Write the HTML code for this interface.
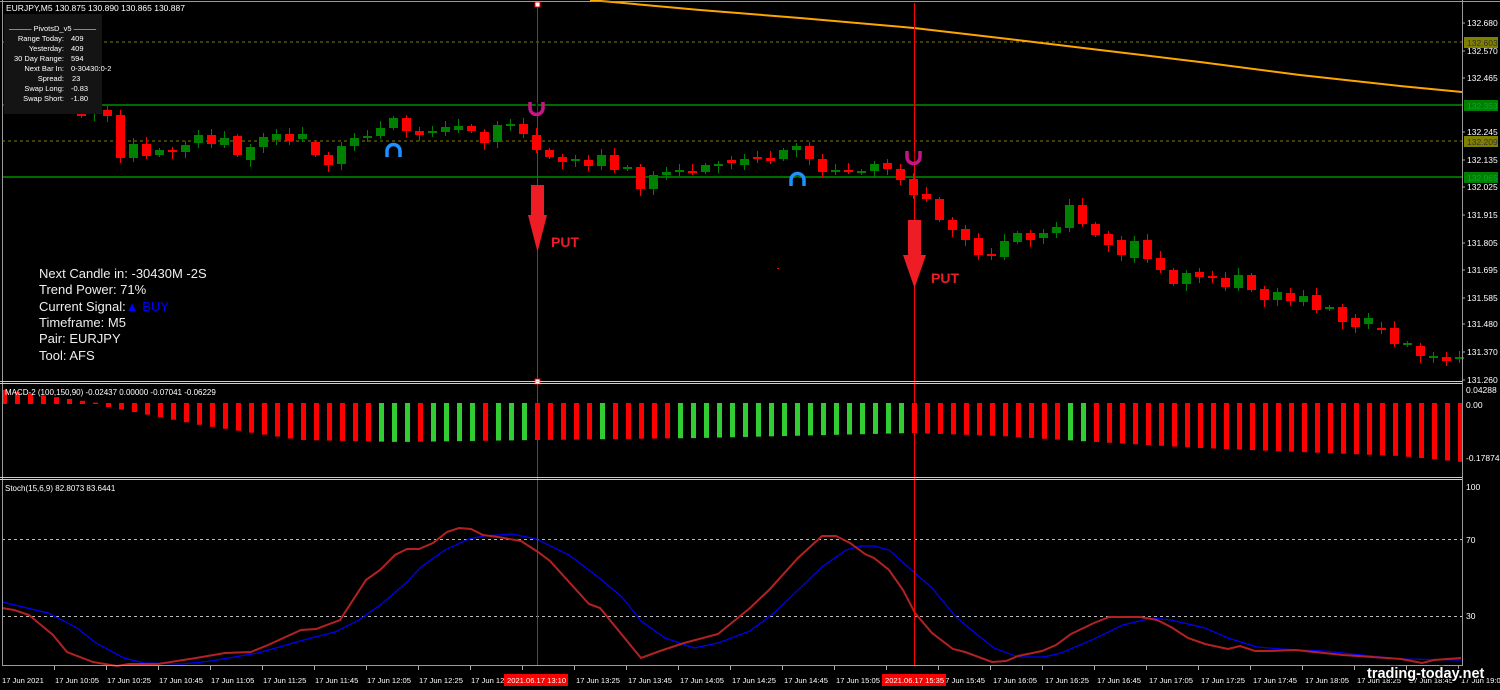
<!DOCTYPE html>
<html><head><meta charset="utf-8"><style>
html,body{margin:0;padding:0;background:#000;width:1500px;height:690px;overflow:hidden}
svg{display:block}
text{font-family:"Liberation Sans",sans-serif}
.ax{fill:#fff;font-size:9px}
.tl{fill:#fff;font-size:8.5px}
</style></head><body>
<svg id="s" width="1500" height="690" xmlns="http://www.w3.org/2000/svg">
<rect width="1500" height="690" fill="#000"/>
<g id="grid">
<line x1="2" y1="42" x2="1462" y2="42" stroke="#808000" stroke-dasharray="3,3"/>
<line x1="2" y1="141" x2="1462" y2="141" stroke="#808000" stroke-dasharray="3,3"/>
<line x1="2" y1="105" x2="1462" y2="105" stroke="#009000" stroke-width="1.5"/>
<line x1="2" y1="177" x2="1462" y2="177" stroke="#009000" stroke-width="1.5"/>
<line x1="2" y1="539.5" x2="1462" y2="539.5" stroke="#bbb" stroke-dasharray="3,3"/>
<line x1="2" y1="616.5" x2="1462" y2="616.5" stroke="#bbb" stroke-dasharray="3,3"/>
</g>
<polyline fill="none" stroke="#ffa500" stroke-width="2" points="590,0 700,10 800,18 914,28 1000,38 1100,50 1200,62 1300,75 1400,86 1462,92"/>
<g id="candles"></g>
<g id="macd"></g>
<polyline fill="none" stroke="#0000ff" stroke-width="1.2" points="2,602 48,613 77,628 96,643 124,658 144,663 182,664 211,661 258,653 311,638 335,632 359,620 383,603 407,582 421,567 445,550 469,539 483,536 512,534 536,539 569,555 598,577 622,597 641,621 665,638 694,648 718,643 750,631 774,613 798,590 822,567 846,550 860,546 874,546 889,550 908,567 932,588 956,617 975,633 994,648 1018,657 1044,657 1061,653 1094,639 1123,625 1152,618 1171,620 1205,628 1228,638 1257,647 1281,649 1324,651 1362,655 1401,659 1461,660"/>
<polyline fill="none" stroke="#b22222" stroke-width="2" points="2,608 14,610 29,615 53,635 67,652 93,662 117,666 129,664 158,664 196,658 225,653 251,652 268,645 301,630 316,629 340,620 366,580 380,570 395,555 407,549 419,549 433,543 447,532 459,528 471,529 483,535 498,537 521,541 538,552 550,561 589,604 600,608 641,658 660,651 684,643 718,634 750,608 769,590 798,558 822,536 836,536 850,543 865,554 874,558 889,570 903,590 915,613 932,633 953,649 965,652 992,662 1006,661 1018,656 1042,651 1056,645 1071,634 1094,623 1109,617 1128,617 1140,617 1157,620 1171,627 1188,638 1205,644 1228,649 1240,646 1255,651 1271,651 1295,650 1324,653 1343,655 1372,657 1401,659 1422,663 1434,660 1461,658"/>
<line x1="537.5" y1="3" x2="537.5" y2="666" stroke="#ff0000"/>
<line x1="914.5" y1="3" x2="914.5" y2="666" stroke="#ff0000"/>
<rect x="535" y="2" width="5" height="5" fill="#fff" stroke="#e00" stroke-width="1"/>
<rect x="535" y="379" width="5" height="5" fill="#fff" stroke="#e00" stroke-width="1"/>
<path d="M531 185 H544 V215 H547 L537.5 252 L528 215 H531 Z" fill="#ee1c24"/>
<text x="551" y="247" fill="#ee1c24" font-size="14" font-weight="bold">PUT</text>
<path d="M908 220 H921 V255 H926 L914.5 288 L903 255 H908 Z" fill="#ee1c24"/>
<text x="931" y="283" fill="#ee1c24" font-size="14" font-weight="bold">PUT</text>
<rect x="777" y="268" width="2" height="1" fill="#e00"/>
<g fill="none" stroke-width="3.5">
<path d="M530 102 V108 A6.5 6.5 0 0 0 543 108 V102" stroke="#c71585"/>
<path d="M907 151 V157 A6.5 6.5 0 0 0 920 157 V151" stroke="#c71585"/>
<path d="M387 157 V151 A6.5 6.5 0 0 1 400 151 V157" stroke="#1e90ff"/>
<path d="M791 186 V180 A6.5 6.5 0 0 1 804 180 V186" stroke="#1e90ff"/>
</g>
<g stroke="#000" stroke-width="1.5"><line x1="536.5" y1="102" x2="536.5" y2="112"/><line x1="913.5" y1="151" x2="913.5" y2="161"/><line x1="393.5" y1="148" x2="393.5" y2="157"/><line x1="797.5" y1="177" x2="797.5" y2="186"/></g>
<g stroke="#9a9a9a" fill="none">
<line x1="0" y1="1.5" x2="1500" y2="1.5"/>
<line x1="2.5" y1="0" x2="2.5" y2="666"/>
<line x1="1462.5" y1="0" x2="1462.5" y2="666"/>
<line x1="0" y1="381.5" x2="1462" y2="381.5" stroke="#ccc"/>
<line x1="0" y1="383.5" x2="1462" y2="383.5" stroke="#ccc"/>
<line x1="0" y1="477.5" x2="1462" y2="477.5" stroke="#ccc"/>
<line x1="0" y1="479.5" x2="1462" y2="479.5" stroke="#ccc"/>
<line x1="2" y1="665.5" x2="1462" y2="665.5"/>
</g>
<text x="6" y="11" class="tl">EURJPY,M5  130.875 130.890 130.865 130.887</text>
<rect x="4" y="14" width="98" height="100" fill="#141414"/>
<g class="tl" style="font-size:7.5px">
<text x="9" y="31">——— PivotsD_v5 ———</text>
<text x="64" y="41" text-anchor="end">Range  Today:</text><text x="71" y="41">409</text>
<text x="64" y="51" text-anchor="end">Yesterday:</text><text x="71" y="51">409</text>
<text x="64" y="61" text-anchor="end">30 Day Range:</text><text x="71" y="61">594</text>
<text x="64" y="71" text-anchor="end">Next Bar In:</text><text x="71" y="71">0-30430:0-2</text>
<text x="64" y="81" text-anchor="end">Spread:</text><text x="72" y="81">23</text>
<text x="64" y="91" text-anchor="end">Swap  Long:</text><text x="71" y="91">-0.83</text>
<text x="64" y="101" text-anchor="end">Swap  Short:</text><text x="71" y="101">-1.80</text>
</g>
<g fill="#eee" font-size="13">
<text x="39" y="278">Next Candle in: -30430M -2S</text>
<text x="39" y="294">Trend Power: 71%</text>
<text x="39" y="311">Current Signal:<tspan fill="#0000ff">▲ BUY</tspan></text>
<text x="39" y="327">Timeframe: M5</text>
<text x="39" y="343">Pair: EURJPY</text>
<text x="39" y="360">Tool: AFS</text>
</g>
<text x="5" y="395" class="tl" style="font-size:8px">MACD-2 (100,150,90) -0.02437 0.00000 -0.07041 -0.06229</text>
<text x="5" y="491" class="tl" style="font-size:8px">Stoch(15,6,9) 82.8073 83.6441</text>
<g class="ax" style="font-size:8.5px">
<text x="1467" y="26">132.680</text>
<text x="1467" y="54">132.570</text>
<text x="1467" y="81">132.465</text>
<text x="1467" y="135">132.245</text>
<text x="1467" y="163">132.135</text>
<text x="1467" y="190">132.025</text>
<text x="1467" y="218">131.915</text>
<text x="1467" y="246">131.805</text>
<text x="1467" y="273">131.695</text>
<text x="1467" y="301">131.585</text>
<text x="1467" y="327">131.480</text>
<text x="1467" y="355">131.370</text>
<text x="1467" y="383">131.260</text>
<rect x="1464" y="37" width="34" height="11" fill="#808000"/><text x="1467" y="46" fill="#333">132.603</text>
<rect x="1464" y="100" width="34" height="11" fill="#008000"/><text x="1467" y="109" fill="#0a3">132.353</text>
<rect x="1464" y="136" width="34" height="11" fill="#808000"/><text x="1467" y="145" fill="#333">132.209</text>
<rect x="1464" y="172" width="34" height="11" fill="#008000"/><text x="1467" y="181" fill="#0a3">132.065</text>
<text x="1466" y="393">0.04288</text>
<text x="1466" y="408">0.00</text>
<text x="1466" y="461">-0.17874</text>
<text x="1466" y="490">100</text>
<text x="1466" y="543">70</text>
<text x="1466" y="619">30</text>
</g>
<g id="ticks" stroke="#aaa"></g>
<g class="tl" style="font-size:7.6px">
<text x="2" y="683">17 Jun 2021</text>
<text x="55" y="683">17 Jun 10:05</text>
<text x="107" y="683">17 Jun 10:25</text>
<text x="159" y="683">17 Jun 10:45</text>
<text x="211" y="683">17 Jun 11:05</text>
<text x="263" y="683">17 Jun 11:25</text>
<text x="315" y="683">17 Jun 11:45</text>
<text x="367" y="683">17 Jun 12:05</text>
<text x="419" y="683">17 Jun 12:25</text>
<text x="471" y="683">17 Jun 12:45</text>
<text x="576" y="683">17 Jun 13:25</text>
<text x="628" y="683">17 Jun 13:45</text>
<text x="680" y="683">17 Jun 14:05</text>
<text x="732" y="683">17 Jun 14:25</text>
<text x="784" y="683">17 Jun 14:45</text>
<text x="836" y="683">17 Jun 15:05</text>
<text x="941" y="683">17 Jun 15:45</text>
<text x="993" y="683">17 Jun 16:05</text>
<text x="1045" y="683">17 Jun 16:25</text>
<text x="1097" y="683">17 Jun 16:45</text>
<text x="1149" y="683">17 Jun 17:05</text>
<text x="1201" y="683">17 Jun 17:25</text>
<text x="1253" y="683">17 Jun 17:45</text>
<text x="1305" y="683">17 Jun 18:05</text>
<text x="1357" y="683">17 Jun 18:25</text>
<text x="1409" y="683">17 Jun 18:45</text>
<text x="1461" y="683">17 Jun 19:05</text>
<rect x="504" y="674" width="64" height="12" fill="#ff0000"/>
<text x="507" y="683">2021.06.17 13:10</text>
<rect x="882" y="674" width="64" height="12" fill="#ff0000"/>
<text x="885" y="683">2021.06.17 15:35</text>
</g>
<line x1="1350" y1="671" x2="1370" y2="671" stroke="#000" stroke-width="2"/>
<text x="1367" y="678" fill="#fff" stroke="#000" stroke-width="2.5" paint-order="stroke" font-size="14.5" font-weight="bold">trading-today.net</text>
</svg>
<script>
var NS="http://www.w3.org/2000/svg";
function el(p,t,a){var e=document.createElementNS(NS,t);for(var k in a)e.setAttribute(k,a[k]);p.appendChild(e);return e;}
var C=[[81,112,116,'r'],[94,112,114,'g'],[107,110,116,'r'],[120,115,158,'r'],[133,144,158,'g'],[146,144,156,'r'],[159,150,155,'g'],[172,150,152,'r'],[185,145,152,'g'],[198,135,143,'g'],[211,135,144,'r'],[224,138,145,'g'],[237,136,155,'r'],[250,147,160,'g'],[263,137,147,'g'],[276,134,140,'g'],[289,134,141,'r'],[302,134,139,'g'],[315,142,155,'r'],[328,155,165,'r'],[341,146,164,'g'],[354,138,146,'g'],[367,136,138,'g'],[380,128,136,'g'],[393,118,128,'g'],[406,118,131,'r'],[419,131,135,'r'],[432,131,132,'g'],[445,127,132,'g'],[458,126,130,'g'],[471,126,131,'r'],[484,132,143,'r'],[497,125,142,'g'],[510,124,126,'g'],[523,124,134,'r'],[536,135,150,'r'],[549,150,157,'r'],[562,157,162,'r'],[575,159,161,'g'],[588,160,166,'r'],[601,155,166,'g'],[614,155,170,'r'],[627,167,169,'g'],[640,167,189,'r'],[653,175,189,'g'],[666,172,175,'g'],[679,170,172,'g'],[692,171,172,'r'],[705,165,172,'g'],[718,164,166,'g'],[731,160,163,'r'],[744,159,165,'g'],[757,157,159,'r'],[770,158,161,'r'],[783,150,159,'g'],[796,146,150,'g'],[809,146,159,'r'],[822,159,172,'r'],[835,170,171,'g'],[848,170,171,'r'],[861,171,173,'g'],[874,164,171,'g'],[887,163,169,'r'],[900,169,180,'r'],[913,179,195,'r'],[926,194,199,'r'],[939,199,220,'r'],[952,220,230,'r'],[965,229,240,'r'],[978,238,255,'r'],[991,254,256,'r'],[1004,241,257,'g'],[1017,233,242,'g'],[1030,233,240,'r'],[1043,233,238,'g'],[1056,227,233,'g'],[1069,205,228,'g'],[1082,205,224,'r'],[1095,224,235,'r'],[1108,234,245,'r'],[1121,240,255,'r'],[1134,241,258,'g'],[1147,240,259,'r'],[1160,258,270,'r'],[1173,270,284,'r'],[1186,273,284,'g'],[1199,272,277,'r'],[1212,276,278,'r'],[1225,278,287,'r'],[1238,275,288,'g'],[1251,275,290,'r'],[1264,289,300,'r'],[1277,292,300,'g'],[1290,293,301,'r'],[1303,296,302,'g'],[1316,295,310,'r'],[1329,307,309,'g'],[1342,307,322,'r'],[1355,318,327,'r'],[1368,318,324,'g'],[1381,328,330,'r'],[1394,328,344,'r'],[1407,343,345,'g'],[1420,346,356,'r'],[1433,356,357,'g'],[1446,357,361,'r'],[1459,357,359,'g']];
var g=document.getElementById('candles');
C.forEach(function(c,i){var col=c[3]=='r'?'#ff0000':'#008000';var wt=c[1]-(2+(i*7)%6),wb=c[2]+(2+(i*5)%6);
el(g,'line',{x1:c[0]+.5,y1:wt,x2:c[0]+.5,y2:wb,stroke:col});
var h=Math.max(2,c[2]-c[1]);el(g,'rect',{x:c[0]-4,y:c[1],width:9,height:h,fill:col});});
var m=document.getElementById('macd');
var BP=[[108,407],[200,425],[300,440],[400,442],[537,440],[700,438],[914,433],[1000,436],[1096,442],[1200,448],[1300,452],[1400,456],[1462,462]];
function bot(x){for(var i=0;i<BP.length-1;i++){if(x<=BP[i+1][0]){var a=BP[i],b=BP[i+1];return a[1]+(b[1]-a[1])*(x-a[0])/(b[0]-a[0]);}}return 462;}
var G={381:1,394:1,407:1,433:1,446:1,459:1,472:1,498:1,511:1,524:1,602:1,1070:1,1083:1};
for(var k=0;k<=112;k++){var x=4+13*k;var xr=Math.round(x);var green=G[xr]||(xr>=680&&xr<=905);var col=green?'#32cd32':'#ff0000';
if(k<8){var t=390+k*1.8;el(m,'rect',{x:xr-2,y:t,width:5,height:404-t,fill:col});}
else{var b=bot(x);el(m,'rect',{x:xr-2,y:403,width:5,height:b-403,fill:col});}}
var tk=document.getElementById('ticks');
[23,51,78,132,160,187,215,243,270,298,324,352,380].forEach(function(y){el(tk,'line',{x1:1462,y1:y,x2:1465,y2:y});});
for(var i=0;i<28;i++){var x=Math.round(54+52*i)+.5;el(tk,'line',{x1:x,y1:666,x2:x,y2:670});}
</script>
</body></html>
